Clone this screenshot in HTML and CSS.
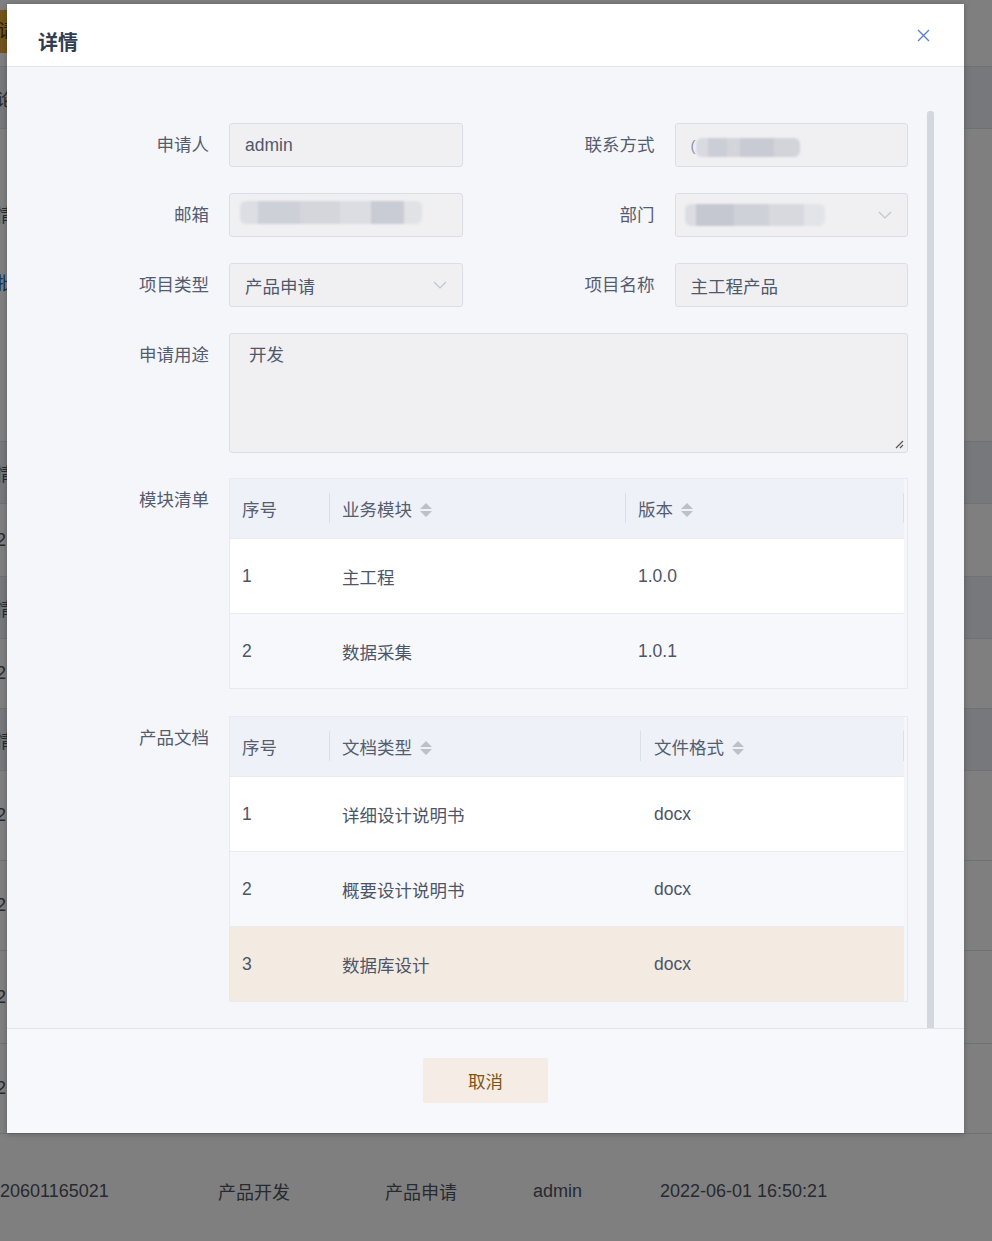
FILE: index.html
```html
<!DOCTYPE html>
<html lang="zh-CN">
<head>
    <meta charset="UTF-8">
    <meta name="viewport" content="width=device-width, initial-scale=1.0">
    <title>详情</title>
    <link rel="stylesheet" href="styles.css">
</head>
<body>
    <!-- list page behind the dialog -->
    <div class="page">
        <div class="pg-row pg-top"><span class="pg-btn">请</span></div>
        <div class="pg-row pg-band"><span class="cut">论</span></div>
        <div class="pg-plain">
            <div class="cut">情</div>
            <div class="cut link">批</div>
        </div>
        <div class="pg-row pg-band"><span class="cut">情</span></div>
        <div class="pg-row"><span class="cut">2</span></div>
        <div class="pg-row pg-band"><span class="cut">情</span></div>
        <div class="pg-row h70"><span class="cut">2</span></div>
        <div class="pg-row pg-band"><span class="cut">情</span></div>
        <div class="pg-row h90"><span class="cut">2</span></div>
        <div class="pg-row h90"><span class="cut">2</span></div>
        <div class="pg-row h93"><span class="cut">2</span></div>
        <div class="pg-row h90"><span class="cut">2</span></div>
        <div class="pg-row pg-last">
            <span class="c1">20601165021</span>
            <span class="c2">产品开发</span>
            <span class="c3">产品申请</span>
            <span class="c4">admin</span>
            <span class="c5">2022-06-01 16:50:21</span>
        </div>
    </div>

    <div class="mask"></div>

    <div class="dialog">
        <div class="dlg-head">
            <span class="dlg-title">详情</span>
            <svg class="dlg-close" width="13" height="13" viewBox="0 0 13 13"><path d="M1 1l11 11M12 1L1 12" stroke="#5b80d4" stroke-width="1.4" fill="none"/></svg>
        </div>

        <div class="dlg-body">
            <div class="form">
                <div class="row">
                    <div class="item">
                        <label>申请人</label>
                        <div class="ctrl">admin</div>
                    </div>
                    <div class="item">
                        <label>联系方式</label>
                        <div class="ctrl"><span class="paren">(</span><span class="blur b-phone"></span></div>
                    </div>
                </div>
                <div class="row">
                    <div class="item">
                        <label>邮箱</label>
                        <div class="ctrl"><span class="blur b-mail"></span></div>
                    </div>
                    <div class="item">
                        <label>部门</label>
                        <div class="ctrl select">
                            <span class="blur b-dept"></span>
                            <svg width="14" height="8" viewBox="0 0 14 8"><path d="M1 1l6 6 6-6" fill="none" stroke="#c0c4cc" stroke-width="1.2"/></svg>
                        </div>
                    </div>
                </div>
                <div class="row">
                    <div class="item">
                        <label>项目类型</label>
                        <div class="ctrl select">
                            <span>产品申请</span>
                            <svg width="14" height="8" viewBox="0 0 14 8"><path d="M1 1l6 6 6-6" fill="none" stroke="#c0c4cc" stroke-width="1.2"/></svg>
                        </div>
                    </div>
                    <div class="item">
                        <label>项目名称</label>
                        <div class="ctrl">主工程产品</div>
                    </div>
                </div>

                <div class="item wide">
                    <label>申请用途</label>
                    <div class="area">
                        开发
                        <svg class="resize" width="10" height="10" viewBox="0 0 10 10"><path d="M9 2L2 9M9 6L6 9" stroke="#555" stroke-width="1.2"/></svg>
                    </div>
                </div>

                <div class="item wide tbl-item">
                    <label>模块清单</label>
                    <div class="tbl-wrap">
                        <table class="t-module">
                            <thead>
                                <tr>
                                    <th>序号</th>
                                    <th>业务模块<svg class="sort" width="12" height="16" viewBox="0 0 12 16"><path d="M0 7L6 1L12 7Z M0 9L6 15L12 9Z" fill="#bcc0c9"/></svg></th>
                                    <th>版本<svg class="sort" width="12" height="16" viewBox="0 0 12 16"><path d="M0 7L6 1L12 7Z M0 9L6 15L12 9Z" fill="#bcc0c9"/></svg></th>
                                </tr>
                            </thead>
                            <tbody>
                                <tr><td>1</td><td>主工程</td><td>1.0.0</td></tr>
                                <tr><td>2</td><td>数据采集</td><td>1.0.1</td></tr>
                            </tbody>
                        </table>
                    </div>
                </div>

                <div class="item wide tbl-item">
                    <label>产品文档</label>
                    <div class="tbl-wrap">
                        <table class="t-doc">
                            <thead>
                                <tr>
                                    <th>序号</th>
                                    <th>文档类型<svg class="sort" width="12" height="16" viewBox="0 0 12 16"><path d="M0 7L6 1L12 7Z M0 9L6 15L12 9Z" fill="#bcc0c9"/></svg></th>
                                    <th>文件格式<svg class="sort" width="12" height="16" viewBox="0 0 12 16"><path d="M0 7L6 1L12 7Z M0 9L6 15L12 9Z" fill="#bcc0c9"/></svg></th>
                                </tr>
                            </thead>
                            <tbody>
                                <tr><td>1</td><td>详细设计说明书</td><td>docx</td></tr>
                                <tr><td>2</td><td>概要设计说明书</td><td>docx</td></tr>
                                <tr class="hover"><td>3</td><td>数据库设计</td><td>docx</td></tr>
                            </tbody>
                        </table>
                    </div>
                </div>
            </div>
            <div class="scrollbar"></div>
        </div>

        <div class="dlg-foot">
            <button class="btn-cancel">取消</button>
        </div>
    </div>
</body>
</html>
```

FILE: styles.css
```css
* {
    box-sizing: border-box;
}
html, body {
    margin: 0;
    padding: 0;
}
body {
    width: 992px;
    height: 1241px;
    overflow: hidden;
    position: relative;
    background: #fff;
    font-family: "Liberation Sans", "Noto Sans CJK SC", sans-serif;
}

/* background list page */
.page {
    width: 992px;
}
.pg-row {
    height: 73px;
    border-top: 1px solid #e0e3ea;
    display: flex;
    align-items: center;
    font-size: 18px;
    color: #4f5462;
}
.pg-top {
    height: 66px;
    border-top: none;
    align-items: flex-start;
    padding-top: 10px;
}
.pg-btn {
    display: block;
    width: 40px;
    height: 43px;
    margin-left: -20px;
    padding-left: 18px;
    line-height: 43px;
    background: #e9a83c;
    color: #4f3510;
    font-size: 18px;
}
.pg-band {
    height: 62px;
    background: #eef0f6;
}
.h70 { height: 70px; }
.h90 { height: 90px; }
.h93 { height: 93px; }
.pg-plain {
    height: 313px;
    border-top: 1px solid #e0e3ea;
    padding-top: 70px;
    font-size: 18px;
    color: #4f5462;
}
.pg-plain .cut {
    line-height: 34px;
    margin-bottom: 34px;
}
.cut {
    margin-left: -4px;
}
.link {
    color: #2f6bb8;
}
.pg-last {
    height: 103px;
    padding-top: 12px;
}
.pg-last span {
    flex-shrink: 0;
}
.c1 { width: 218px; }
.c2 { width: 167px; }
.c3 { width: 148px; }
.c4 { width: 127px; }

.mask {
    position: absolute;
    left: 0;
    top: 0;
    right: 0;
    bottom: 0;
    background: rgba(0, 0, 0, 0.5);
}

/* dialog */
.dialog {
    position: absolute;
    left: 7px;
    top: 4px;
    width: 957px;
    height: 1129px;
    background: #f5f6fa;
    box-shadow: 0 1px 6px rgba(0, 0, 0, 0.25);
    display: flex;
    flex-direction: column;
}
.dlg-head {
    height: 63px;
    flex-shrink: 0;
    background: #fff;
    border-bottom: 1px solid #e3e5eb;
    display: flex;
    align-items: center;
    justify-content: space-between;
    padding: 0 34px 0 31px;
}
.dlg-title {
    margin-top: 13px;
    font-size: 20px;
    font-weight: bold;
    color: #323d52;
}
.dlg-body {
    flex: 1;
    display: flex;
    padding: 56px 30px 0 92px;
    overflow: hidden;
}
.form {
    flex: 1;
}
.scrollbar {
    width: 7px;
    margin-left: 19px;
    margin-top: -12px;
    background: #d3d7df;
    border-radius: 3px 3px 0 0;
    flex-shrink: 0;
}

.row {
    display: flex;
    gap: 82px;
}
.item {
    flex: 1;
    display: flex;
    margin-bottom: 26px;
}
.item label {
    width: 130px;
    flex-shrink: 0;
    padding-right: 20px;
    text-align: right;
    line-height: 44px;
    font-size: 17.5px;
    color: #535c70;
}
.ctrl {
    flex: 1;
    height: 44px;
    background: #f0f0f3;
    border: 1px solid #dcdee5;
    border-radius: 3px;
    padding: 0 15px;
    display: flex;
    align-items: center;
    font-size: 17.5px;
    color: #4f586b;
    overflow: hidden;
}
.select {
    justify-content: space-between;
}
/* mosaic used to hide personal data */
.blur {
    display: inline-block;
    filter: blur(0.8px);
    border-radius: 6px;
}
.paren {
    color: #8a90a0;
    font-size: 15px;
}
.b-phone {
    width: 104px;
    height: 19px;
    margin-top: 4px;
    background: linear-gradient(90deg, #d8dadf 0 12%, #cbced6 12% 30%, #d3d5db 30% 42%, #c8cbd3 42% 75%, #d2d4da 75%);
}
.b-mail {
    width: 182px;
    height: 23px;
    margin-left: -5px;
    margin-top: -6px;
    background: linear-gradient(90deg, #dcdee3 0 10%, #cdd0d7 10% 33%, #d4d6dc 33% 55%, #dbdde2 55% 72%, #c9ccd4 72% 90%, #e1e2e6 90%);
}
.b-dept {
    width: 140px;
    height: 22px;
    margin-left: -6px;
    background: linear-gradient(90deg, #dcdde2 0 8%, #c5c8d0 8% 35%, #cfd1d8 35% 60%, #d7d9de 60% 85%, #e3e4e8 85%);
}

.area {
    flex: 1;
    height: 120px;
    position: relative;
    background: #f0f0f3;
    border: 1px solid #dcdee5;
    border-radius: 3px;
    padding: 10px 19px;
    line-height: 22px;
    font-size: 17.5px;
    color: #4f586b;
}
.resize {
    position: absolute;
    right: 3px;
    bottom: 3px;
}
.wide {
    margin-bottom: 25px;
}
.tbl-item {
    margin-bottom: 27px;
}

/* tables */
.tbl-wrap {
    flex: 1;
    border: 1px solid #e8eaf0;
    padding-right: 3px;
}
table {
    width: 100%;
    border-collapse: collapse;
    table-layout: fixed;
    font-size: 17.5px;
    color: #4d5568;
}
th {
    position: relative;
    height: 59px;
    padding: 0 12px;
    background: #eef1f8;
    font-weight: normal;
    text-align: left;
    color: #555d70;
    border-bottom: 1px solid #e6e9f0;
}
th::after {
    content: "";
    position: absolute;
    right: 0;
    top: 14px;
    width: 1px;
    height: 30px;
    background: #dcdfe6;
}
td {
    height: 75px;
    padding: 2px 12px 0;
    border-bottom: 1px solid #e8eaef;
}
tbody tr:last-child td {
    border-bottom: none;
}
tbody tr:nth-child(1) {
    background: #fff;
}
tbody tr:nth-child(2) {
    background: #f7f8fb;
}
tbody tr.hover {
    background: #f3ebe2;
}
.t-module th:nth-child(1) { width: 100px; }
.t-module th:nth-child(2) { width: 296px; }
.t-doc th:nth-child(1) { width: 100px; }
.t-doc th:nth-child(2) { width: 311px; }
.t-doc th:nth-child(3), .t-doc td:nth-child(3) {
    padding-left: 13px;
}
.sort {
    vertical-align: -2px;
    margin-left: 8px;
}

.dlg-foot {
    height: 105px;
    flex-shrink: 0;
    background: #f7f8fc;
    border-top: 1px solid #e2e4ea;
    display: flex;
    justify-content: center;
    padding-top: 29px;
}
.btn-cancel {
    width: 125px;
    height: 45px;
    background: #f4ece5;
    border: none;
    border-radius: 2px;
    font-family: "Liberation Sans", "Noto Sans CJK SC", sans-serif;
    font-size: 17.5px;
    color: #7d5516;
    cursor: pointer;
}
```
